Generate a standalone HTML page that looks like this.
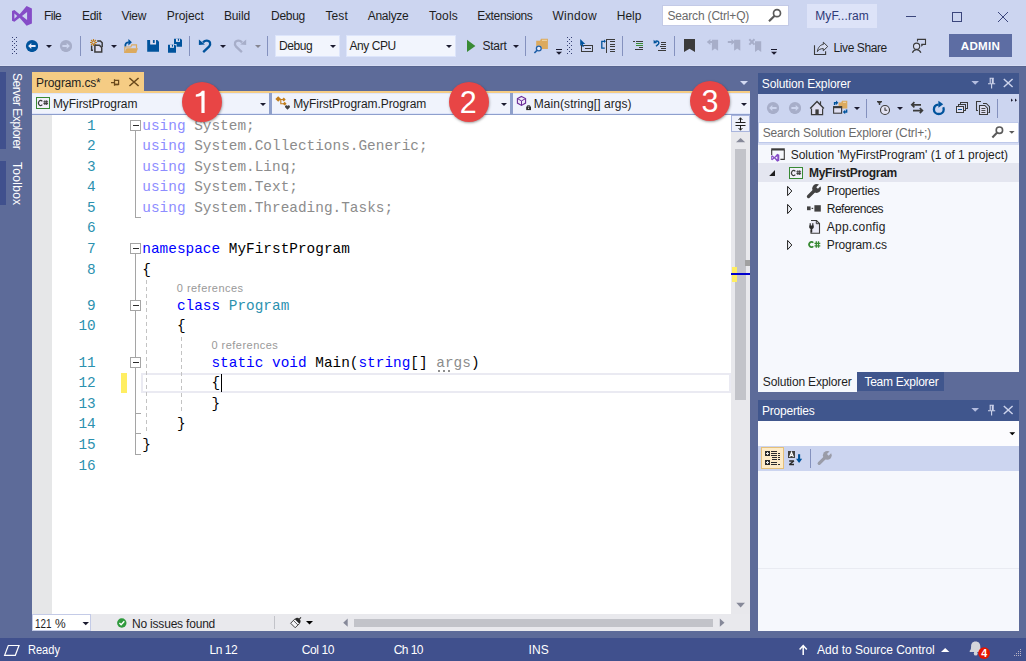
<!DOCTYPE html>
<html><head><meta charset="utf-8"><title>Program.cs - MyFirstProgram</title>
<style>
html,body{margin:0;padding:0}
body{width:1026px;height:661px;overflow:hidden;position:relative;background:#5d6b99;font-family:"Liberation Sans",sans-serif}
div,span,svg{position:absolute;display:block}
span{white-space:pre}
</style></head><body>

<div style="left:0px;top:0px;width:1026px;height:66px;background:#ccd5f0;"></div>
<div style="left:0px;top:65px;width:1026px;height:1px;background:#d6ddf4;"></div>
<div style="left:0px;top:66px;width:1026px;height:1px;background:#56648f;"></div>
<div style="left:662px;top:5px;width:127px;height:21px;background:#ffffff;box-sizing:border-box;border:1px solid #c3cae6;"></div>
<div style="left:807px;top:4px;width:70px;height:24px;background:#dde3f8;"></div>
<div style="left:275px;top:35px;width:65px;height:22px;background:#f2f5fd;box-sizing:border-box;border:1px solid #dde5fb;"></div>
<div style="left:346px;top:35px;width:110px;height:22px;background:#f2f5fd;box-sizing:border-box;border:1px solid #dde5fb;"></div>
<div style="left:949px;top:34px;width:63px;height:23px;background:#5d6da3;"></div>
<div style="left:80px;top:36px;width:1px;height:20px;background:#8491be;"></div>
<div style="left:189px;top:36px;width:1px;height:20px;background:#8491be;"></div>
<div style="left:267px;top:36px;width:1px;height:20px;background:#8491be;"></div>
<div style="left:525px;top:36px;width:1px;height:20px;background:#8491be;"></div>
<div style="left:622px;top:36px;width:1px;height:20px;background:#8491be;"></div>
<div style="left:674px;top:36px;width:1px;height:20px;background:#8491be;"></div>
<div style="left:0px;top:72px;width:6px;height:77px;background:#40508d;"></div>
<div style="left:0px;top:161px;width:6px;height:43.5px;background:#40508d;"></div>
<div style="left:32px;top:72px;width:112px;height:19px;background:#f5cc84;"></div>
<div style="left:32px;top:91px;width:718px;height:2px;background:#f5cc84;"></div>
<div style="left:32px;top:93px;width:718px;height:21px;background:#f0f3fc;box-sizing:border-box;border-top:1px solid #dfe6fa;border-bottom:1px solid #dfe6fa;"></div>
<div style="left:32px;top:114px;width:718px;height:1px;background:#8e9fcd;"></div>
<div style="left:269.2px;top:93px;width:2.7px;height:22px;background:#8fa0cb;"></div>
<div style="left:510px;top:93px;width:2.7px;height:22px;background:#8fa0cb;"></div>
<div style="left:32px;top:115px;width:718px;height:499px;background:#ffffff;"></div>
<div style="left:32px;top:115px;width:20px;height:499px;background:#e6e7e8;"></div>
<div style="left:731px;top:115px;width:19px;height:499px;background:#e8e8ec;"></div>
<div style="left:731px;top:115px;width:19px;height:17px;background:#eef1fb;box-sizing:border-box;border:1px solid #a9b5dd;"></div>
<div style="left:734.5px;top:149px;width:11.5px;height:251px;background:#c2c3c9;"></div>
<div style="left:744.5px;top:260px;width:5px;height:6px;background:#a0a0a0;"></div>
<div style="left:731.5px;top:267px;width:5px;height:15px;background:#ffee62;"></div>
<div style="left:731px;top:273px;width:19px;height:2px;background:#0000cd;"></div>
<div style="left:32px;top:614px;width:718px;height:17px;background:#e9e9ed;"></div>
<div style="left:32px;top:614px;width:59px;height:17px;background:#ffffff;box-sizing:border-box;border:1px solid #c4cbe7;"></div>
<div style="left:274px;top:616px;width:1px;height:13px;background:#c2c3c9;"></div>
<div style="left:354px;top:618.6px;width:359px;height:8.2px;background:#c2c3c9;"></div>
<div style="left:141px;top:373px;width:590px;height:20px;background:transparent;box-sizing:border-box;border:2px solid #eaeaf2;"></div>
<div style="left:120.5px;top:372.5px;width:6.5px;height:20.5px;background:#ffee62;"></div>
<div style="left:220.5px;top:373.5px;width:1.2px;height:18px;background:#000000;"></div>
<div style="left:438px;top:370px;width:2px;height:2px;background:#8f8f8f;"></div>
<div style="left:442.7px;top:370px;width:2px;height:2px;background:#8f8f8f;"></div>
<div style="left:447.5px;top:370px;width:2.2px;height:2px;background:#8f8f8f;"></div>
<div style="left:758px;top:73px;width:261px;height:21px;background:#40568d;"></div>
<div style="left:758px;top:94px;width:261px;height:28px;background:#ccd5f0;"></div>
<div style="left:758px;top:122px;width:261px;height:23px;background:#d5dcf3;"></div>
<div style="left:758px;top:122px;width:261px;height:21px;background:#ffffff;box-sizing:border-box;border:1px solid #bec9ea;"></div>
<div style="left:758px;top:145px;width:261px;height:227px;background:#f6f8fd;"></div>
<div style="left:758px;top:163px;width:261px;height:18.7px;background:#e4e6f0;"></div>
<div style="left:866px;top:98.5px;width:1px;height:19.5px;background:#8491be;"></div>
<div style="left:997px;top:98.5px;width:1px;height:19.5px;background:#8491be;"></div>
<div style="left:758px;top:372px;width:99px;height:20px;background:#f6f8fd;"></div>
<div style="left:857px;top:372px;width:87px;height:19px;background:#40568d;"></div>
<div style="left:758px;top:400px;width:261px;height:21px;background:#40568d;"></div>
<div style="left:758px;top:421px;width:261px;height:25px;background:#fcfcfe;"></div>
<div style="left:758px;top:446px;width:261px;height:25px;background:#ccd5f0;"></div>
<div style="left:758px;top:471px;width:261px;height:160px;background:#f6f8fd;"></div>
<div style="left:761px;top:447px;width:23px;height:22px;background:#fdebc8;box-sizing:border-box;border:1px solid #e5c07a;"></div>
<div style="left:758px;top:568px;width:261px;height:1px;background:#e9ebf2;"></div>
<div style="left:810px;top:449px;width:1px;height:19px;background:#8491be;"></div>
<div style="left:0px;top:638px;width:1026px;height:23px;background:#40508d;"></div>
<svg style="left:10px;top:4px;" width="24" height="24" viewBox="10 4 24 24"><path fill="#854cc7" fill-rule="evenodd" d="M12,11.1 L14.4,10 L19.6,14.2 L26.6,6 L31.9,8.4 V23.4 L26.6,25.8 L19.6,17.8 L14.4,21.8 L12,20.7 Z M27.1,12 V20 L22,16 Z M14.4,13.4 V18.8 L17.2,16 Z"/></svg>
<svg style="left:11px;top:36px;shape-rendering:crispEdges;" width="8" height="20" viewBox="11 36 8 20"><g fill="#353f73"><rect x="12" y="37" width="1" height="1"/><rect x="16" y="37" width="1" height="1"/><rect x="14" y="39" width="1" height="1"/><rect x="12" y="41" width="1" height="1"/><rect x="16" y="41" width="1" height="1"/><rect x="14" y="43" width="1" height="1"/><rect x="12" y="45" width="1" height="1"/><rect x="16" y="45" width="1" height="1"/><rect x="14" y="47" width="1" height="1"/><rect x="12" y="49" width="1" height="1"/><rect x="16" y="49" width="1" height="1"/><rect x="14" y="51" width="1" height="1"/><rect x="12" y="53" width="1" height="1"/><rect x="16" y="53" width="1" height="1"/></g></svg>
<svg style="left:566px;top:36px;shape-rendering:crispEdges;" width="8" height="20" viewBox="566 36 8 20"><g fill="#353f73"><rect x="567" y="37" width="1" height="1"/><rect x="571" y="37" width="1" height="1"/><rect x="569" y="39" width="1" height="1"/><rect x="567" y="41" width="1" height="1"/><rect x="571" y="41" width="1" height="1"/><rect x="569" y="43" width="1" height="1"/><rect x="567" y="45" width="1" height="1"/><rect x="571" y="45" width="1" height="1"/><rect x="569" y="47" width="1" height="1"/><rect x="567" y="49" width="1" height="1"/><rect x="571" y="49" width="1" height="1"/><rect x="569" y="51" width="1" height="1"/><rect x="567" y="53" width="1" height="1"/><rect x="571" y="53" width="1" height="1"/></g></svg>
<svg style="left:24px;top:38px;" width="14" height="14" viewBox="24 38 14 14"><circle cx="32" cy="46" r="6.1" fill="#00539c"/><path d="M28.1,46 L31.3,43 V45 H35.6 V47 H31.3 V49 Z" fill="#e9ecfb"/></svg>
<svg style="left:58px;top:38px;" width="14" height="14" viewBox="58 38 14 14"><circle cx="66" cy="46" r="6.1" fill="#a7aec9"/><path d="M69.9,46 L66.7,43 V45 H62.4 V47 H66.7 V49 Z" fill="#cdd5ee"/></svg>
<svg style="left:44px;top:43px;" width="10" height="7" viewBox="44 43 10 7"><path d="M46,45 H52 L49.0,48.0 Z" fill="#1b1b2f"/></svg>
<svg style="left:88px;top:37px;" width="17" height="18" viewBox="88 37 17 18">
<g stroke="#c27d1a" stroke-width="1.1" stroke-linecap="butt"><path d="M93.5,39 V46 M90,42.5 H97 M91,40 L96,45 M96,40 L91,45"/></g>
<circle cx="93.5" cy="42.5" r="1.1" fill="#ccd5f0"/>
<path d="M97.2,40.9 H100.4 L102.2,42.7 V47" fill="none" stroke="#3b3b3b" stroke-width="1.5"/>
<path d="M91.6,45.6 V50.2 H93" fill="none" stroke="#3b3b3b" stroke-width="1.4"/>
<path d="M94.9,45.2 H99.4 L101.7,47.5 V52 H94.9 Z" fill="#dedef0" stroke="#3b3b3b" stroke-width="1.5"/>
</svg>
<svg style="left:109px;top:43px;" width="10" height="7" viewBox="109 43 10 7"><path d="M111,45 H117 L114.0,48.0 Z" fill="#1b1b2f"/></svg>
<svg style="left:122px;top:37px;" width="18" height="18" viewBox="122 37 18 18">
<path d="M124.8,53 V47 H130.8 L131.8,44.8 H136.5 V48.4" fill="none" stroke="#dcaa5e" stroke-width="1.2"/>
<path d="M126.5,48.3 H138 L136.3,53.1 H124.3 Z" fill="#dcaa5e"/>
<path d="M125.4,46.4 C124.9,43.6 126.4,42.3 128.8,42.3" fill="none" stroke="#00539c" stroke-width="1.8"/>
<path d="M128.4,39.1 L131.9,42.3 L128.4,45.5 Z" fill="#00539c"/>
</svg>
<svg style="left:146px;top:39px;" width="15" height="15" viewBox="146 39 15 15"><path d="M147.2,40 H157.32833333333332 L159.0,41.67166666666667 V51.8 H147.2 Z" fill="#00539c"/><rect x="150.14999999999998" y="40" width="5.9" height="4.523333333333333" fill="#dedef0"/><rect x="152.9033333333333" y="40" width="1.7700000000000002" height="2.95" fill="#00539c"/></svg>
<svg style="left:167px;top:38px;" width="16" height="16" viewBox="167 38 16 16"><path d="M174,38.8 H180.86666666666667 L182,39.93333333333333 V46.8 H174 Z" fill="#00539c"/><rect x="176.0" y="38.8" width="4.0" height="3.0666666666666664" fill="#dedef0"/><rect x="177.86666666666667" y="38.8" width="1.2" height="2.0" fill="#00539c"/><path d="M167.3,44 H176.6 V53.4 H167.3 Z" fill="#ccd5f0"/><path d="M168,44.7 H174.86666666666667 L176,45.833333333333336 V52.7 H168 Z" fill="#00539c"/><rect x="170.0" y="44.7" width="4.0" height="3.0666666666666664" fill="#dedef0"/><rect x="171.86666666666667" y="44.7" width="1.2" height="2.0" fill="#00539c"/></svg>
<svg style="left:197px;top:37px;" width="16" height="18" viewBox="197 37 16 18"><path d="M203.2,52.2 L209,46.6 C211.3,44.2 210.2,40.6 206.6,40.6 C205.2,40.6 204.2,41.2 203,42.4" fill="none" stroke="#00539c" stroke-width="2.3"/><path d="M198.9,39.4 V45 L204.9,44.6 Z" fill="#00539c"/></svg>
<svg style="left:232px;top:37px;" width="16" height="18" viewBox="232 37 16 18"><g transform="translate(445.1,0) scale(-1,1)"><path d="M203.2,52.2 L209,46.6 C211.3,44.2 210.2,40.6 206.6,40.6 C205.2,40.6 204.2,41.2 203,42.4" fill="none" stroke="#a7aec9" stroke-width="2.3"/><path d="M198.9,39.4 V45 L204.9,44.6 Z" fill="#a7aec9"/></g></svg>
<svg style="left:218px;top:43px;" width="10" height="7" viewBox="218 43 10 7"><path d="M220,45 H226 L223.0,48.0 Z" fill="#1b1b2f"/></svg>
<svg style="left:253px;top:43px;" width="10" height="7" viewBox="253 43 10 7"><path d="M255,45 H261 L258.0,48.0 Z" fill="#858590"/></svg>
<svg style="left:328px;top:43px;" width="10" height="7" viewBox="328 43 10 7"><path d="M330,45 H336 L333.0,48.0 Z" fill="#1b1b2f"/></svg>
<svg style="left:444px;top:43px;" width="10" height="7" viewBox="444 43 10 7"><path d="M446,45 H452 L449.0,48.0 Z" fill="#1b1b2f"/></svg>
<svg style="left:465px;top:38px;" width="12" height="16" viewBox="465 38 12 16"><path d="M467,39.8 L475.4,45.9 L467,52 Z" fill="#388a34"/></svg>
<svg style="left:511px;top:43px;" width="10" height="7" viewBox="511 43 10 7"><path d="M513,45 H519 L516.0,48.0 Z" fill="#1b1b2f"/></svg>
<svg style="left:532px;top:37px;" width="18" height="18" viewBox="532 37 18 18">
<path d="M536.2,40.8 H540 L541,38.8 H547.9 V49 H536.2 Z" fill="#dcaa5e"/>
<rect x="542" y="39.8" width="5" height="1" fill="#efd9b0"/>
<circle cx="538.8" cy="48.5" r="3" fill="#ccd5f0"/>
<circle cx="538.8" cy="48.5" r="2.4" fill="#e6eaf8" stroke="#1f5fa8" stroke-width="1.3"/>
<path d="M537,50.4 L534.4,53" stroke="#1f5fa8" stroke-width="1.6"/>
</svg>
<svg style="left:555px;top:47px;" width="9" height="9" viewBox="555 47 9 9"><rect x="556" y="49" width="6" height="1" fill="#1b1b2f" shape-rendering="crispEdges"/><path d="M556,51.7 H562 L559.0,54.7 Z" fill="#1b1b2f"/></svg>
<svg style="left:770px;top:47px;" width="9" height="9" viewBox="770 47 9 9"><rect x="771" y="49" width="6" height="1" fill="#1b1b2f" shape-rendering="crispEdges"/><path d="M771,51.7 H777 L774.0,54.7 Z" fill="#1b1b2f"/></svg>
<svg style="left:578px;top:37px;" width="17" height="17" viewBox="578 37 17 17">
<path d="M581.5,45.5 H592.5 V51.5 H581.5 Z" fill="#ccd5f0" stroke="#3b3b3b" stroke-width="1" shape-rendering="crispEdges"/>
<path d="M584.5,48.5 H590.5" stroke="#3b3b3b" stroke-width="1" shape-rendering="crispEdges"/>
<path d="M580.2,39 L585.2,44 H582.8 L584,46.4 L582.7,47 L581.5,44.6 L580.2,46 Z" fill="#00539c"/>
</svg>
<svg style="left:600px;top:37px;" width="17" height="17" viewBox="600 37 17 17">
<path d="M604.8,41.3 H601.8 V48.2 H604.8" fill="none" stroke="#00539c" stroke-width="1.3"/>
<path d="M604,39.6 L606,41.3 L604,43" fill="#00539c"/>
<g fill="#3b3b3b" shape-rendering="crispEdges"><rect x="606" y="39" width="1" height="14"/><rect x="606" y="39" width="9.4" height="1"/><rect x="610" y="41" width="5.4" height="1"/><rect x="610" y="44" width="5.4" height="1"/><rect x="610" y="46" width="5.4" height="1"/><rect x="610" y="49" width="5.4" height="1"/><rect x="610" y="51" width="5.4" height="1"/></g>
</svg>
<svg style="left:632px;top:39px;" width="12" height="13" viewBox="632 39 12 13">
<g shape-rendering="crispEdges"><rect x="633" y="41" width="1.5" height="1" fill="#3b3b3b"/><rect x="636" y="41" width="7" height="1" fill="#3b3b3b"/>
<rect x="636" y="43" width="7" height="1" fill="#388a34"/><rect x="636" y="45" width="7" height="1" fill="#388a34"/>
<rect x="639" y="47" width="4" height="1" fill="#3b3b3b"/><rect x="635" y="49" width="8" height="1" fill="#3b3b3b"/></g>
</svg>
<svg style="left:652px;top:38px;" width="16" height="15" viewBox="652 38 16 15">
<path d="M656,46.3 L658.2,44.2 C659.4,43 658.8,41 656.9,41 C656.2,41 655.8,41.2 655.4,41.6" fill="none" stroke="#00539c" stroke-width="1.5"/>
<path d="M653.6,39.8 V43.4 L657.2,43 Z" fill="#00539c"/>
<g shape-rendering="crispEdges" fill="#3b3b3b"><rect x="661" y="42" width="5" height="1"/><rect x="661" y="44" width="5" height="1"/><rect x="660" y="46" width="6" height="1"/><rect x="661" y="48" width="5" height="1"/><rect x="658" y="50" width="8" height="1"/></g>
</svg>
<svg style="left:683px;top:38px;" width="13" height="15" viewBox="683 38 13 15"><path d="M684,39 H695 V52 L689.5,48.7 L684,52 Z" fill="#3b3b3b"/></svg>
<svg style="left:706px;top:38px;" width="14" height="15" viewBox="706 38 14 15"><path d="M711.9,39.8 H718.1 V50.8 L715.0,48.599999999999994 L711.9,50.8 Z" fill="#a7aec9"/><path d="M706.8,42 L710.4,38.9 V41 H714.4 V43 H710.4 V45.1 Z" fill="#a7aec9"/></svg>
<svg style="left:727px;top:38px;" width="14" height="15" viewBox="727 38 14 15"><path d="M734.1,39.8 H740.3000000000001 V50.8 L737.2,48.599999999999994 L734.1,50.8 Z" fill="#a7aec9"/><path d="M735,42 L731.4,38.9 V41 H727.8 V43 H731.4 V45.1 Z" fill="#a7aec9"/></svg>
<svg style="left:748px;top:38px;" width="14" height="15" viewBox="748 38 14 15"><path d="M755,41.2 H761.2 V51.900000000000006 L758.1,49.7 L755,51.900000000000006 Z" fill="#a7aec9"/><path d="M749.3,39.3 L754.5,44.6 M754.5,39.3 L749.3,44.6" stroke="#a7aec9" stroke-width="2"/></svg>
<svg style="left:812px;top:40px;" width="18" height="16" viewBox="812 40 18 16">
<path d="M814.5,45.2 V54.5 H825.6 V51.2" fill="none" stroke="#3b3b3b" stroke-width="1.1"/>
<path d="M817.4,51.6 C818,47.2 820.4,44.7 823.3,44.5 V42.2 L827.7,46.5 L823.3,50.8 V48.6 C820.5,48.6 818.6,49.6 817.4,51.6 Z" fill="#d8ddf1" stroke="#3b3b3b" stroke-width="1"/>
</svg>
<svg style="left:910px;top:37px;" width="18" height="18" viewBox="910 37 18 18">
<path d="M917.5,41.6 V39.4 H925.5 V44.4 H921.3" fill="none" stroke="#3b3b3b" stroke-width="1.1"/>
<path d="M921.2,44.2 L923,45.4 L921.2,46.8 Z" fill="#3b3b3b"/>
<circle cx="916.6" cy="46.2" r="3.1" fill="#d8ddf1" stroke="#3b3b3b" stroke-width="1.1"/>
<path d="M912.4,52.8 C913.2,50.6 914.6,49.6 916.6,49.6 C918.6,49.6 920,50.6 920.9,52.8" fill="none" stroke="#3b3b3b" stroke-width="1.2"/>
</svg>
<svg style="left:904px;top:10px;" width="14" height="14" viewBox="904 10 14 14"><rect x="906" y="16" width="10" height="1" fill="#3b467c" shape-rendering="crispEdges"/></svg>
<svg style="left:950px;top:10px;" width="14" height="14" viewBox="950 10 14 14"><rect x="952.5" y="12.5" width="9" height="9" fill="none" stroke="#3b467c" stroke-width="1" shape-rendering="crispEdges"/></svg>
<svg style="left:996px;top:10px;" width="14" height="14" viewBox="996 10 14 14"><path d="M998,12 L1008,22 M1008,12 L998,22" stroke="#3b467c" stroke-width="1"/></svg>
<svg style="left:766px;top:7px;" width="17" height="17" viewBox="766 7 17 17"><circle cx="777" cy="13.2" r="3.5" fill="none" stroke="#5a5a5a" stroke-width="1.7"/><path d="M774.6,15.8 L769,21.2" stroke="#5a5a5a" stroke-width="2.2"/></svg>
<svg style="left:109px;top:76px;" width="12" height="12" viewBox="109 76 12 12"><g stroke="#6b4a1d" fill="none" stroke-width="1.25"><path d="M111,82.5 H114.5 M114.5,79.3 V85.7"/><path d="M114.5,80.4 H118.6 V84.3 H114.5"/><path d="M114.5,84.6 H118.6" stroke-width="1.5"/></g></svg>
<svg style="left:127px;top:76px;" width="14" height="12" viewBox="127 76 14 12"><path d="M129.4,78 L138.6,86 M138.6,78 L129.4,86" stroke="#6b4a1d" stroke-width="1.6"/></svg>
<svg style="left:738px;top:79px;" width="12" height="8" viewBox="738 79 12 8"><path d="M740,81 H748 L744.0,85.0 Z" fill="#d3daf2"/></svg>
<svg style="left:258px;top:101px;" width="10" height="7" viewBox="258 101 10 7"><path d="M260,103 H266 L263.0,106.0 Z" fill="#1b1b2f"/></svg>
<svg style="left:499px;top:101px;" width="10" height="7" viewBox="499 101 10 7"><path d="M501,103 H507 L504.0,106.0 Z" fill="#1b1b2f"/></svg>
<svg style="left:739px;top:101px;" width="10" height="7" viewBox="739 101 10 7"><path d="M741,103 H747 L744.0,106.0 Z" fill="#1b1b2f"/></svg>
<svg style="left:35px;top:96px;" width="16" height="14" viewBox="35 96 16 14"><rect x="36.5" y="97.5" width="13" height="11" fill="#f2f0fa" stroke="#388a34" stroke-width="1"/><path d="M42.3,101.3 A2.15,2.6 0 1 0 42.3,104.7" fill="none" stroke="#3c3c3c" stroke-width="1.15"/><path d="M44.9,100.3 V105 M46.7,100.3 V105 M43.4,101.8 H48.1 M43.4,103.6 H48.1" fill="none" stroke="#3c3c3c" stroke-width="1"/></svg>
<svg style="left:788px;top:166px;" width="16" height="14" viewBox="788 166 16 14"><rect x="789.5" y="167.5" width="13" height="11" fill="#f2f0fa" stroke="#388a34" stroke-width="1"/><path d="M795.3,171.3 A2.15,2.6 0 1 0 795.3,174.7" fill="none" stroke="#3c3c3c" stroke-width="1.15"/><path d="M797.9,170.3 V175 M799.7,170.3 V175 M796.4,171.8 H801.1 M796.4,173.6 H801.1" fill="none" stroke="#3c3c3c" stroke-width="1"/></svg>
<svg style="left:274px;top:94px;" width="18" height="18" viewBox="274 94 18 18">
<path d="M278.2,96.2 L281,99 L278.2,101.8 L275.4,99 Z" fill="#c27d1a"/>
<path d="M283.8,97.6 L285.7,99.5 L283.8,101.4 L281.9,99.5 Z" fill="#c27d1a"/>
<path d="M284.7,101.8 L286.6,103.7 L284.7,105.6 L282.8,103.7 Z" fill="#c27d1a"/>
<path d="M279,99.5 H283 M280.8,99.5 V103.7 H284" fill="none" stroke="#c27d1a" stroke-width="1.1"/>
<path d="M287.5,109.8 L285.3,107.4 C284.6,106.4 285.3,105.2 286.3,105.2 C286.9,105.2 287.3,105.5 287.5,106 C287.7,105.5 288.1,105.2 288.7,105.2 C289.7,105.2 290.4,106.4 289.7,107.4 Z" fill="#424242"/>
</svg>
<svg style="left:515px;top:94px;" width="18" height="18" viewBox="515 94 18 18">
<path d="M521.5,96.4 L525.6,98.6 V103.1 L521.5,105.4 L517.4,103.1 V98.6 Z" fill="#efe9f7" stroke="#6a2c98" stroke-width="1.1"/>
<path d="M517.6,98.7 L521.5,100.9 L525.4,98.7 M521.5,100.9 V105.2" fill="none" stroke="#6a2c98" stroke-width="1"/>
<rect x="526.2" y="106.6" width="4.8" height="3.5" fill="#2b2b2b"/>
<path d="M527.4,106.8 V105.8 H529.8 V106.8" fill="none" stroke="#2b2b2b" stroke-width="1"/>
<rect x="528.1" y="107.7" width="1" height="1.2" fill="#f0f0f0"/>
</svg>
<svg style="left:733px;top:116px;" width="16" height="16" viewBox="733 116 16 16"><g stroke="#1e1e1e" stroke-width="1" fill="none"><path d="M735.5,122.5 H745.5 M735.5,125.5 H745.5 M740.5,117.8 V122 M740.5,126 V130.2"/><path d="M738.6,120 L740.5,117.8 L742.4,120 M738.6,128 L740.5,130.2 L742.4,128"/></g></svg>
<svg style="left:734px;top:136px;" width="13" height="8" viewBox="734 136 13 8"><path d="M736,142.3 H745.2 L740.6,138 Z" fill="#868999"/></svg>
<svg style="left:734px;top:601px;" width="13" height="8" viewBox="734 601 13 8"><path d="M736.3,602.8 H745 L740.6,607.4 Z" fill="#868999"/></svg>
<svg style="left:341px;top:617px;" width="9" height="12" viewBox="341 617 9 12"><path d="M347.7,618.6 V626.8 L343.2,622.7 Z" fill="#868999"/></svg>
<svg style="left:717px;top:617px;" width="9" height="12" viewBox="717 617 9 12"><path d="M719.8,618.6 V626.8 L724.5,622.7 Z" fill="#868999"/></svg>
<svg style="left:128px;top:116px;" width="60" height="340" viewBox="128 116 60 340"><g shape-rendering="crispEdges">
<path d="M135.5,131 V217.5 H141" fill="none" stroke="#a5a5a5" stroke-width="1"/>
<path d="M135.5,254 V454.5 H141 M135.5,413.5 H141 M135.5,433.5 H141" fill="none" stroke="#a5a5a5" stroke-width="1"/>
<path d="M146.5,280 V431 M181.5,337 V413" fill="none" stroke="#c3c3c3" stroke-width="1" stroke-dasharray="4 3"/>
<rect x="130.5" y="120.5" width="10" height="10" fill="#ffffff" stroke="#a5a5a5" stroke-width="1"/><rect x="132.5" y="125" width="6" height="1" fill="#2c2c2c"/><rect x="130.5" y="243.5" width="10" height="10" fill="#ffffff" stroke="#a5a5a5" stroke-width="1"/><rect x="132.5" y="248" width="6" height="1" fill="#2c2c2c"/><rect x="130.5" y="300.5" width="10" height="10" fill="#ffffff" stroke="#a5a5a5" stroke-width="1"/><rect x="132.5" y="305" width="6" height="1" fill="#2c2c2c"/><rect x="130.5" y="357.5" width="10" height="10" fill="#ffffff" stroke="#a5a5a5" stroke-width="1"/><rect x="132.5" y="362" width="6" height="1" fill="#2c2c2c"/>
</g></svg>
<svg style="left:80px;top:619px;" width="12" height="8" viewBox="80 619 12 8"><path d="M82.5,622 H89 L85.75,625.25 Z" fill="#1b1b2f"/></svg>
<svg style="left:116px;top:617px;" width="12" height="12" viewBox="116 617 12 12"><circle cx="121.8" cy="623" r="4.7" fill="#2f9a3d"/><path d="M119.4,623.1 L121.1,624.8 L124.3,621.2" fill="none" stroke="#fff" stroke-width="1.4"/></svg>
<svg style="left:288px;top:614px;" width="16" height="16" viewBox="288 614 16 16"><g transform="translate(296.3,622.1) rotate(45)">
<path d="M0,-6.6 V-4" stroke="#2b2b2b" stroke-width="1.1"/>
<path d="M-3.3,-1.2 A3.3,3.3 0 0 1 3.3,-1.2 Z" fill="#2b2b2b"/>
<rect x="-3.2" y="-1.2" width="6.4" height="6" fill="#f6f6fa" stroke="#3b3b3b" stroke-width="0.9"/>
<path d="M-3.2,0.9 H3.2" stroke="#3b3b3b" stroke-width="0.8"/>
</g></svg>
<svg style="left:304px;top:619px;" width="12" height="8" viewBox="304 619 12 8"><path d="M306,621 H313 L309.5,624.5 Z" fill="#000000"/></svg>
<svg style="left:2px;top:643px;" width="20" height="15" viewBox="2 643 20 15"><path d="M8.3,645.5 H19 L15.3,655.3 H4.6 Z" fill="none" stroke="#ffffff" stroke-width="1.2"/></svg>
<svg style="left:797px;top:643px;" width="12" height="14" viewBox="797 643 12 14"><path d="M803.2,655 V646 M799.6,649.6 L803.2,645.6 L806.8,649.6" fill="none" stroke="#ffffff" stroke-width="1.5"/></svg>
<svg style="left:939px;top:646px;" width="12" height="8" viewBox="939 646 12 8"><path d="M941,652 H949.4 L945.2,648 Z" fill="#ffffff"/></svg>
<svg style="left:968px;top:640px;" width="24" height="21" viewBox="968 640 24 21"><path d="M975.6,641.5 C978.9,641.5 980.3,643.7 980.3,646.4 C980.3,649 981,650.2 981.7,650.8 V651.9 H969.7 V650.8 C970.4,650.2 971.1,649 971.1,646.4 C971.1,643.7 972.3,641.5 975.6,641.5 Z" fill="#d5d6db"/><ellipse cx="975.7" cy="653.4" rx="1.9" ry="2.2" fill="#d5d6db"/>
<circle cx="984.1" cy="653.1" r="5.9" fill="#e51400"/>
<text x="984.1" y="656.9" text-anchor="middle" font-family="Liberation Sans, sans-serif" font-weight="bold" font-size="10.6" fill="#ffffff">4</text></svg>
<svg style="left:1012px;top:647px;" width="13" height="13" viewBox="1012 647 13 13"><g fill="#b7b2c3"><rect x="1020" y="649" width="1" height="1"/><rect x="1018" y="651" width="1" height="1"/><rect x="1020" y="651" width="1" height="1"/><rect x="1016" y="653" width="1" height="1"/><rect x="1018" y="653" width="1" height="1"/><rect x="1020" y="653" width="1" height="1"/><rect x="1014" y="655" width="1" height="1"/><rect x="1016" y="655" width="1" height="1"/><rect x="1018" y="655" width="1" height="1"/><rect x="1020" y="655" width="1" height="1"/></g></svg>
<svg style="left:765px;top:100px;" width="14" height="14" viewBox="765 100 14 14"><circle cx="773" cy="108" r="6.1" fill="#a7aec9"/><path d="M769.1,108 L772.3000000000001,105 V107 H776.6 V109 H772.3000000000001 V111 Z" fill="#cdd5ee"/></svg>
<svg style="left:787px;top:100px;" width="14" height="14" viewBox="787 100 14 14"><circle cx="795" cy="108" r="6.1" fill="#a7aec9"/><path d="M798.9,108 L795.6999999999999,105 V107 H791.4 V109 H795.6999999999999 V111 Z" fill="#cdd5ee"/></svg>
<svg style="left:808px;top:99px;" width="18" height="18" viewBox="808 99 18 18">
<path d="M811.5,108 V114.6 H822.6 V108 L817,102.2 Z" fill="#dedef0"/>
<path d="M811.5,108.6 V114.6 H822.6 V108.6" fill="none" stroke="#3b3b3b" stroke-width="1.2"/>
<path d="M810.2,108.6 L817,101.6 L823.9,108.6" fill="none" stroke="#3b3b3b" stroke-width="1.4"/>
<path d="M820.5,101.3 V105" stroke="#3b3b3b" stroke-width="1.2"/>
<rect x="815.4" y="109.4" width="3.3" height="5.2" fill="#3b3b3b"/>
</svg>
<svg style="left:831px;top:99px;" width="18" height="17" viewBox="831 99 18 17">
<path d="M838.6,102.6 H841.2 L842,100.8 H847.3 V108.6 H838.6 Z" fill="#dcaa5e"/>
<rect x="843" y="101.8" width="3" height="1" fill="#efd9b0"/>
<rect x="833.6" y="106.8" width="8" height="6.4" fill="#dedef0" stroke="#3b3b3b" stroke-width="1.1"/>
<rect x="833.1" y="106.2" width="9" height="2" fill="#3b3b3b"/>
<path d="M834.6,105 V102.8 H836.4" fill="none" stroke="#00539c" stroke-width="1.5"/>
<path d="M836,100.6 L838.4,102.8 L836,105 Z" fill="#00539c"/>
<path d="M846.6,109.6 V112 H845" fill="none" stroke="#00539c" stroke-width="1.5"/>
<path d="M845.2,109.8 L842.8,112 L845.2,114.2 Z" fill="#00539c"/>
</svg>
<svg style="left:852px;top:105px;" width="10" height="7" viewBox="852 105 10 7"><path d="M854,107 H860 L857.0,110.0 Z" fill="#1b1b2f"/></svg>
<svg style="left:875px;top:99px;" width="17" height="17" viewBox="875 99 17 17">
<path d="M877,100.9 H882 V101.9 L880.2,103.4 V105 H878.8 V103.4 L877,101.9 Z" fill="#3b3b3b"/>
<circle cx="885" cy="110" r="4.5" fill="#e3e3f3" stroke="#3b3b3b" stroke-width="1.1"/>
<path d="M885,107.4 V110.3 H887.2" fill="none" stroke="#3b3b3b" stroke-width="1.1"/>
</svg>
<svg style="left:895px;top:105px;" width="10" height="7" viewBox="895 105 10 7"><path d="M897,107 H903 L900.0,110.0 Z" fill="#1b1b2f"/></svg>
<svg style="left:909px;top:100px;" width="16" height="16" viewBox="909 100 16 16">
<g fill="none" stroke="#3b3b3b" stroke-width="1.7"><path d="M912.4,104.8 H921 M914.4,102.2 L911.8,104.8 L914.4,107.4"/><path d="M913,110.6 H921.8 M919.8,108 L922.4,110.6 L919.8,113.2"/></g>
</svg>
<svg style="left:931px;top:99px;" width="16" height="18" viewBox="931 99 16 18">
<path d="M938.6,104.6 C935.8,104.8 933.9,106.8 933.9,109.4 C933.9,112 936,114 938.8,114 C941.6,114 943.7,112 943.7,109.4 C943.7,108.6 943.5,107.9 943.2,107.3" fill="none" stroke="#00539c" stroke-width="2.3"/>
<path d="M938.4,100.8 L943.2,104.3 L938.4,107.8 Z" fill="#00539c"/>
</svg>
<svg style="left:954px;top:100px;" width="15" height="15" viewBox="954 100 15 15">
<g fill="none" stroke="#3b3b3b" stroke-width="1" shape-rendering="crispEdges"><path d="M960.5,104 V102.5 H967.5 V108.5 H966"/><path d="M958.5,106 V104.5 H965.5 V110.5 H964"/>
<rect x="956.5" y="106.5" width="7" height="6" fill="#dedef0"/></g>
<rect x="958" y="109" width="4" height="1" fill="#00539c" shape-rendering="crispEdges"/>
</svg>
<svg style="left:974px;top:99px;" width="17" height="17" viewBox="974 99 17 17">
<g fill="none" stroke="#3b3b3b" stroke-width="1.05">
<path d="M981,101.5 H976.5 V110.5 H978"/>
<path d="M983,103.5 H986.3 L989.5,106.7 V112.5 H988.4"/>
<path d="M979.5,105.5 H984.8 L987.5,108.2 V114.5 H979.5 Z" fill="#dedef0"/>
<path d="M981.4,108.5 H985.4 M981.4,110.5 H985.4 M981.4,112.5 H985.4" stroke-width="0.9"/>
</g></svg>
<svg style="left:1009px;top:97px;" width="10" height="6" viewBox="1009 97 10 6"><path d="M1011,98.6 L1013,100.2 L1011,101.8 Z M1015,98.6 L1017,100.2 L1015,101.8 Z" fill="#1b1b2f"/></svg>
<svg style="left:969px;top:78px;" width="12" height="10" viewBox="969 78 12 10"><path d="M971.4,81.0 H979 L975.2,84.80000000000001 Z" fill="#b4bde0"/></svg>
<svg style="left:985px;top:76px;" width="13" height="15" viewBox="985 76 13 15"><g fill="none" stroke="#cfd5ec" stroke-width="1.1"><path d="M989.6,78.3 H993.8 M990.2,78.3 V83.6 M993,78.3 V83.6"/><path d="M992.6,78.3 V83.6" stroke-width="1.6"/><path d="M988,83.8 H995.2 M991.6,83.8 V88.6"/></g></svg>
<svg style="left:1001px;top:76px;" width="14" height="14" viewBox="1001 76 14 14"><path d="M1003.8,79 L1012.6,87 M1012.6,79 L1003.8,87" stroke="#cbd2eb" stroke-width="1.5"/></svg>
<svg style="left:969px;top:405px;" width="12" height="10" viewBox="969 405 12 10"><path d="M971.4,408.0 H979 L975.2,411.8 Z" fill="#b4bde0"/></svg>
<svg style="left:985px;top:403px;" width="13" height="15" viewBox="985 403 13 15"><g fill="none" stroke="#cfd5ec" stroke-width="1.1"><path d="M989.6,405.3 H993.8 M990.2,405.3 V410.6 M993,405.3 V410.6"/><path d="M992.6,405.3 V410.6" stroke-width="1.6"/><path d="M988,410.8 H995.2 M991.6,410.8 V415.6"/></g></svg>
<svg style="left:1001px;top:403px;" width="14" height="14" viewBox="1001 403 14 14"><path d="M1003.8,406 L1012.6,414 M1012.6,406 L1003.8,414" stroke="#cbd2eb" stroke-width="1.5"/></svg>
<svg style="left:990px;top:124px;" width="16" height="16" viewBox="990 124 16 16"><circle cx="999.4" cy="130.2" r="3.2" fill="none" stroke="#5a5a5a" stroke-width="1.6"/><path d="M997.2,132.6 L992.4,137.6" stroke="#5a5a5a" stroke-width="2.1"/></svg>
<svg style="left:1007px;top:129px;" width="10" height="7" viewBox="1007 129 10 7"><path d="M1009,131 H1014.6 L1011.8,133.8 Z" fill="#5a5a5a"/></svg>
<svg style="left:769px;top:146px;" width="18" height="18" viewBox="769 146 18 18">
<path d="M771.2,149.4 H784.8" stroke="#3b3b3b" stroke-width="2.2"/>
<path d="M771.7,150 V155 M784.3,150 V159.4 H780.4" fill="none" stroke="#3b3b3b" stroke-width="1.1"/>
<path fill="#854cc7" fill-rule="evenodd" d="M771.2,155.7 L772.2,155.2 L774.4,157 L777.2,153.7 L779.3,154.7 V160.8 L777.2,161.8 L774.4,158.5 L772.2,160.3 L771.2,159.8 Z M777.3,156.2 V159.3 L775.3,157.75 Z M772.2,156.7 V158.8 L773.3,157.75 Z"/>
</svg>
<svg style="left:767px;top:168px;" width="10" height="10" viewBox="767 168 10 10"><path d="M769.2,176 H775 V170 Z" fill="#1e1e1e"/></svg>
<svg style="left:785px;top:184.5px;" width="9" height="12" viewBox="785 184.5 9 12"><path d="M787.6,185.9 V195.1 L791.8,190.5 Z" fill="none" stroke="#1e1e1e" stroke-width="1"/></svg>
<svg style="left:785px;top:202.5px;" width="9" height="12" viewBox="785 202.5 9 12"><path d="M787.6,203.9 V213.1 L791.8,208.5 Z" fill="none" stroke="#1e1e1e" stroke-width="1"/></svg>
<svg style="left:785px;top:238.8px;" width="9" height="12" viewBox="785 238.8 9 12"><path d="M787.6,240.20000000000002 V249.4 L791.8,244.8 Z" fill="none" stroke="#1e1e1e" stroke-width="1"/></svg>
<svg style="left:805px;top:183px;" width="18" height="16" viewBox="805 183 18 16"><path d="M808.5,196.5 L816.5999999999999,188.5" stroke="#424242" stroke-width="3.3" stroke-linecap="round"/><circle cx="816.5999999999999" cy="188.5" r="4.4" fill="#424242"/><path d="M817.0999999999999,188.0 L821.5999999999999,183.5" stroke="#f6f8fd" stroke-width="2.4"/></svg>
<svg style="left:806px;top:204px;" width="16" height="9" viewBox="806 204 16 9"><g fill="#424242"><rect x="807" y="206.4" width="3.6" height="3.8"/><rect x="811.6" y="207.8" width="1.6" height="1.2"/><rect x="814.4" y="205.2" width="6.4" height="6.4"/></g></svg>
<svg style="left:806px;top:219px;" width="16" height="16" viewBox="806 219 16 16">
<path d="M811,220.5 H816.5 L819.5,223.5 V233.3 H811 V229.5" fill="#ebebf7" stroke="#3b3b3b" stroke-width="1.1"/>
<path d="M816.3,220.5 V223.7 H819.5" fill="none" stroke="#3b3b3b" stroke-width="1"/>
<path d="M810.2,223.2 V226 M812.8,223.2 V226" stroke="#2b2b2b" stroke-width="1.2"/>
<path d="M809.2,225.4 H813.8 V227 C813.8,228.6 812.6,229 811.5,229 C810.4,229 809.2,228.6 809.2,227 Z" fill="#2b2b2b"/>
<path d="M811.5,228.6 V232.4" stroke="#2b2b2b" stroke-width="1.5"/>
</svg>
<svg style="left:807px;top:239px;" width="15" height="11" viewBox="807 239 15 11"><g fill="none" stroke="#388a34">
<path d="M813.2,242.7 A2.3,2.7 0 1 0 813.2,246.3" stroke-width="1.8"/>
<path d="M816.3,241.2 V247.8 M818.5,241.2 V247.8 M814.5,243.3 H820.3 M814.5,245.8 H820.3" stroke-width="1.3"/></g></svg>
<svg style="left:1007px;top:430px;" width="10" height="7" viewBox="1007 430 10 7"><path d="M1009.4,432.3 H1015.2 L1012.3,435.20000000000005 Z" fill="#000000"/></svg>
<svg style="left:763px;top:449px;" width="19" height="18" viewBox="763 449 19 18"><g shape-rendering="crispEdges" fill="#2b2b2b">
<rect x="765" y="451" width="5" height="5"/><rect x="765" y="460" width="5" height="5"/>
<rect x="771" y="451" width="6" height="1"/><rect x="771" y="453" width="6" height="1"/><rect x="771" y="455" width="6" height="1"/><rect x="772" y="457" width="5" height="1"/><rect x="772" y="459" width="5" height="1"/>
<rect x="771" y="462" width="6" height="1"/><rect x="771" y="464" width="6" height="1"/>
<rect x="778" y="453" width="1.5" height="1"/><rect x="778" y="455" width="1.5" height="1"/><rect x="778" y="457" width="1.5" height="1"/><rect x="778" y="459" width="1.5" height="1"/><rect x="778" y="464" width="1.5" height="1"/>
</g><g fill="#e8e8e8" shape-rendering="crispEdges"><rect x="766" y="453" width="3" height="1"/><rect x="767" y="452" width="1" height="3"/><rect x="766" y="462" width="3" height="1"/><rect x="767" y="461" width="1" height="3"/></g></svg>
<svg style="left:787px;top:449px;" width="17" height="18" viewBox="787 449 17 18">
<rect x="788" y="451" width="7" height="7" fill="#424242"/>
<path d="M789.6,457 L791.5,452.2 L793.4,457 M790.3,455.4 H792.7" fill="none" stroke="#ffffff" stroke-width="1.1"/>
<path d="M789.2,461 H793.9 L789.3,464.5 H794" fill="none" stroke="#2b2b2b" stroke-width="1.3" stroke-linejoin="bevel"/>
<path d="M799.1,454.2 V461.4" fill="none" stroke="#00539c" stroke-width="2.1"/>
<path d="M796,458.8 L799.1,462.9 L802.2,458.8 Z" fill="#00539c"/>
</svg>
<svg style="left:815px;top:449px;" width="18" height="18" viewBox="815 449 18 18"><path d="M819.2,463.3 L827.3,455.3" stroke="#9a9ca8" stroke-width="3.3" stroke-linecap="round"/><circle cx="827.3" cy="455.3" r="4.4" fill="#9a9ca8"/><path d="M827.8,454.8 L832.3,450.3" stroke="#ccd5f0" stroke-width="2.4"/></svg>
<span style="left:43.90px;top:10.04px;font:normal 12px/12px 'Liberation Sans', sans-serif;color:#1e1e1e;letter-spacing:-0.481px;">File</span>
<span style="left:81.90px;top:10.04px;font:normal 12px/12px 'Liberation Sans', sans-serif;color:#1e1e1e;letter-spacing:-0.263px;">Edit</span>
<span style="left:121.50px;top:10.04px;font:normal 12px/12px 'Liberation Sans', sans-serif;color:#1e1e1e;letter-spacing:-0.299px;">View</span>
<span style="left:166.80px;top:10.04px;font:normal 12px/12px 'Liberation Sans', sans-serif;color:#1e1e1e;letter-spacing:-0.060px;">Project</span>
<span style="left:223.90px;top:10.04px;font:normal 12px/12px 'Liberation Sans', sans-serif;color:#1e1e1e;letter-spacing:-0.097px;">Build</span>
<span style="left:271.10px;top:10.04px;font:normal 12px/12px 'Liberation Sans', sans-serif;color:#1e1e1e;letter-spacing:-0.294px;">Debug</span>
<span style="left:325.50px;top:10.04px;font:normal 12px/12px 'Liberation Sans', sans-serif;color:#1e1e1e;letter-spacing:0.095px;">Test</span>
<span style="left:367.70px;top:10.04px;font:normal 12px/12px 'Liberation Sans', sans-serif;color:#1e1e1e;letter-spacing:-0.267px;">Analyze</span>
<span style="left:429.10px;top:10.04px;font:normal 12px/12px 'Liberation Sans', sans-serif;color:#1e1e1e;letter-spacing:0.171px;">Tools</span>
<span style="left:477.30px;top:10.04px;font:normal 12px/12px 'Liberation Sans', sans-serif;color:#1e1e1e;letter-spacing:-0.356px;">Extensions</span>
<span style="left:552.50px;top:10.04px;font:normal 12px/12px 'Liberation Sans', sans-serif;color:#1e1e1e;letter-spacing:0.282px;">Window</span>
<span style="left:616.80px;top:10.04px;font:normal 12px/12px 'Liberation Sans', sans-serif;color:#1e1e1e;letter-spacing:-0.029px;">Help</span>
<span style="left:667.50px;top:10.04px;font:normal 12px/12px 'Liberation Sans', sans-serif;color:#6a6a6a;letter-spacing:-0.183px;">Search (Ctrl+Q)</span>
<span style="left:815.20px;top:10.04px;font:normal 12px/12px 'Liberation Sans', sans-serif;color:#2d3a78;letter-spacing:0.116px;">MyF...ram</span>
<span style="left:279.00px;top:40.04px;font:normal 12px/12px 'Liberation Sans', sans-serif;color:#1e1e1e;letter-spacing:-0.394px;">Debug</span>
<span style="left:349.50px;top:40.04px;font:normal 12px/12px 'Liberation Sans', sans-serif;color:#1e1e1e;letter-spacing:-0.443px;">Any CPU</span>
<span style="left:482.50px;top:40.04px;font:normal 12px/12px 'Liberation Sans', sans-serif;color:#1e1e1e;letter-spacing:-0.261px;">Start</span>
<span style="left:833.50px;top:42.04px;font:normal 12px/12px 'Liberation Sans', sans-serif;color:#1e1e1e;letter-spacing:-0.397px;">Live Share</span>
<span style="left:960.80px;top:40.18px;font:bold 11.6px/11.6px 'Liberation Sans', sans-serif;color:#ffffff;letter-spacing:0.250px;">ADMIN</span>
<span style="left:36.10px;top:77.04px;font:normal 12px/12px 'Liberation Sans', sans-serif;color:#1e1e1e;letter-spacing:-0.133px;">Program.cs*</span>
<span style="left:52.90px;top:98.04px;font:normal 12px/12px 'Liberation Sans', sans-serif;color:#1e1e1e;letter-spacing:-0.057px;">MyFirstProgram</span>
<span style="left:293.20px;top:98.04px;font:normal 12px/12px 'Liberation Sans', sans-serif;color:#1e1e1e;letter-spacing:-0.076px;">MyFirstProgram.Program</span>
<span style="left:533.80px;top:98.04px;font:normal 12px/12px 'Liberation Sans', sans-serif;color:#1e1e1e;letter-spacing:0.061px;">Main(string[] args)</span>
<span style="left:34.50px;top:618.04px;font:normal 12px/12px 'Liberation Sans', sans-serif;color:#1e1e1e;transform-origin:0 0;transform:scaleX(0.8237);">121</span>
<span style="left:55.10px;top:618.04px;font:normal 12px/12px 'Liberation Sans', sans-serif;color:#1e1e1e;">%</span>
<span style="left:132.00px;top:618.04px;font:normal 12px/12px 'Liberation Sans', sans-serif;color:#1e1e1e;letter-spacing:-0.197px;">No issues found</span>
<span style="left:87.05px;top:119.06px;font:normal 14.4px/14.4px 'Liberation Mono', monospace;color:#2b91af;">1</span>
<span style="left:87.05px;top:139.06px;font:normal 14.4px/14.4px 'Liberation Mono', monospace;color:#2b91af;">2</span>
<span style="left:87.05px;top:160.06px;font:normal 14.4px/14.4px 'Liberation Mono', monospace;color:#2b91af;">3</span>
<span style="left:87.05px;top:180.06px;font:normal 14.4px/14.4px 'Liberation Mono', monospace;color:#2b91af;">4</span>
<span style="left:87.05px;top:201.06px;font:normal 14.4px/14.4px 'Liberation Mono', monospace;color:#2b91af;">5</span>
<span style="left:87.05px;top:221.06px;font:normal 14.4px/14.4px 'Liberation Mono', monospace;color:#2b91af;">6</span>
<span style="left:87.05px;top:242.06px;font:normal 14.4px/14.4px 'Liberation Mono', monospace;color:#2b91af;">7</span>
<span style="left:87.05px;top:263.06px;font:normal 14.4px/14.4px 'Liberation Mono', monospace;color:#2b91af;">8</span>
<span style="left:87.05px;top:299.06px;font:normal 14.4px/14.4px 'Liberation Mono', monospace;color:#2b91af;">9</span>
<span style="left:78.41px;top:319.06px;font:normal 14.4px/14.4px 'Liberation Mono', monospace;color:#2b91af;letter-spacing:0.013px;">10</span>
<span style="left:78.41px;top:356.06px;font:normal 14.4px/14.4px 'Liberation Mono', monospace;color:#2b91af;letter-spacing:0.013px;">11</span>
<span style="left:78.41px;top:376.06px;font:normal 14.4px/14.4px 'Liberation Mono', monospace;color:#2b91af;letter-spacing:0.013px;">12</span>
<span style="left:78.41px;top:397.06px;font:normal 14.4px/14.4px 'Liberation Mono', monospace;color:#2b91af;letter-spacing:0.013px;">13</span>
<span style="left:78.41px;top:417.06px;font:normal 14.4px/14.4px 'Liberation Mono', monospace;color:#2b91af;letter-spacing:0.013px;">14</span>
<span style="left:78.41px;top:438.06px;font:normal 14.4px/14.4px 'Liberation Mono', monospace;color:#2b91af;letter-spacing:0.013px;">15</span>
<span style="left:78.41px;top:459.06px;font:normal 14.4px/14.4px 'Liberation Mono', monospace;color:#2b91af;letter-spacing:0.013px;">16</span>
<span style="left:142.30px;top:119.06px;font:normal 14.4px/14.4px 'Liberation Mono', monospace;color:#8d8dff;letter-spacing:0.012px;">using</span>
<span style="left:194.18px;top:119.06px;font:normal 14.4px/14.4px 'Liberation Mono', monospace;color:#8c8c8c;letter-spacing:0.013px;">System;</span>
<span style="left:142.30px;top:139.06px;font:normal 14.4px/14.4px 'Liberation Mono', monospace;color:#8d8dff;letter-spacing:0.012px;">using</span>
<span style="left:194.18px;top:139.06px;font:normal 14.4px/14.4px 'Liberation Mono', monospace;color:#8c8c8c;letter-spacing:0.011px;">System.Collections.Generic;</span>
<span style="left:142.30px;top:160.06px;font:normal 14.4px/14.4px 'Liberation Mono', monospace;color:#8d8dff;letter-spacing:0.012px;">using</span>
<span style="left:194.18px;top:160.06px;font:normal 14.4px/14.4px 'Liberation Mono', monospace;color:#8c8c8c;letter-spacing:0.011px;">System.Linq;</span>
<span style="left:142.30px;top:180.06px;font:normal 14.4px/14.4px 'Liberation Mono', monospace;color:#8d8dff;letter-spacing:0.012px;">using</span>
<span style="left:194.18px;top:180.06px;font:normal 14.4px/14.4px 'Liberation Mono', monospace;color:#8c8c8c;letter-spacing:0.011px;">System.Text;</span>
<span style="left:142.30px;top:201.06px;font:normal 14.4px/14.4px 'Liberation Mono', monospace;color:#8d8dff;letter-spacing:0.012px;">using</span>
<span style="left:194.18px;top:201.06px;font:normal 14.4px/14.4px 'Liberation Mono', monospace;color:#8c8c8c;letter-spacing:0.012px;">System.Threading.Tasks;</span>
<span style="left:142.30px;top:242.06px;font:normal 14.4px/14.4px 'Liberation Mono', monospace;color:#0000ff;letter-spacing:0.011px;">namespace</span>
<span style="left:228.77px;top:242.06px;font:normal 14.4px/14.4px 'Liberation Mono', monospace;color:#000000;letter-spacing:0.012px;">MyFirstProgram</span>
<span style="left:142.30px;top:263.06px;font:normal 14.4px/14.4px 'Liberation Mono', monospace;color:#000000;">{</span>
<span style="left:176.89px;top:299.06px;font:normal 14.4px/14.4px 'Liberation Mono', monospace;color:#0000ff;letter-spacing:0.012px;">class</span>
<span style="left:228.77px;top:299.06px;font:normal 14.4px/14.4px 'Liberation Mono', monospace;color:#2b91af;letter-spacing:0.013px;">Program</span>
<span style="left:176.89px;top:319.06px;font:normal 14.4px/14.4px 'Liberation Mono', monospace;color:#000000;">{</span>
<span style="left:211.48px;top:356.06px;font:normal 14.4px/14.4px 'Liberation Mono', monospace;color:#0000ff;letter-spacing:0.011px;">static</span>
<span style="left:272.00px;top:356.06px;font:normal 14.4px/14.4px 'Liberation Mono', monospace;color:#0000ff;letter-spacing:0.014px;">void</span>
<span style="left:315.24px;top:356.06px;font:normal 14.4px/14.4px 'Liberation Mono', monospace;color:#000000;letter-spacing:0.012px;">Main(</span>
<span style="left:358.48px;top:356.06px;font:normal 14.4px/14.4px 'Liberation Mono', monospace;color:#0000ff;letter-spacing:0.011px;">string</span>
<span style="left:410.36px;top:356.06px;font:normal 14.4px/14.4px 'Liberation Mono', monospace;color:#000000;letter-spacing:0.013px;">[]</span>
<span style="left:436.30px;top:356.06px;font:normal 14.4px/14.4px 'Liberation Mono', monospace;color:#8c8c8c;letter-spacing:0.014px;">args</span>
<span style="left:470.89px;top:356.06px;font:normal 14.4px/14.4px 'Liberation Mono', monospace;color:#000000;">)</span>
<span style="left:211.48px;top:376.06px;font:normal 14.4px/14.4px 'Liberation Mono', monospace;color:#000000;">{</span>
<span style="left:211.48px;top:397.06px;font:normal 14.4px/14.4px 'Liberation Mono', monospace;color:#000000;">}</span>
<span style="left:176.89px;top:417.06px;font:normal 14.4px/14.4px 'Liberation Mono', monospace;color:#000000;">}</span>
<span style="left:142.30px;top:438.06px;font:normal 14.4px/14.4px 'Liberation Mono', monospace;color:#000000;">}</span>
<span style="left:176.80px;top:283.09px;font:normal 11px/11px 'Liberation Sans', sans-serif;color:#999999;letter-spacing:0.468px;">0 references</span>
<span style="left:211.50px;top:340.09px;font:normal 11px/11px 'Liberation Sans', sans-serif;color:#999999;letter-spacing:0.468px;">0 references</span>
<span style="left:761.80px;top:78.04px;font:normal 12px/12px 'Liberation Sans', sans-serif;color:#ffffff;letter-spacing:-0.149px;">Solution Explorer</span>
<span style="left:762.70px;top:127.04px;font:normal 12px/12px 'Liberation Sans', sans-serif;color:#6a6a6a;letter-spacing:-0.140px;">Search Solution Explorer (Ctrl+;)</span>
<span style="left:790.70px;top:149.04px;font:normal 12px/12px 'Liberation Sans', sans-serif;color:#1e1e1e;letter-spacing:0.002px;">Solution &#x27;MyFirstProgram&#x27; (1 of 1 project)</span>
<span style="left:809.00px;top:167.04px;font:bold 12px/12px 'Liberation Sans', sans-serif;color:#1e1e1e;letter-spacing:-0.287px;">MyFirstProgram</span>
<span style="left:826.80px;top:185.04px;font:normal 12px/12px 'Liberation Sans', sans-serif;color:#1e1e1e;letter-spacing:-0.200px;">Properties</span>
<span style="left:826.80px;top:203.04px;font:normal 12px/12px 'Liberation Sans', sans-serif;color:#1e1e1e;letter-spacing:-0.508px;">References</span>
<span style="left:826.80px;top:221.04px;font:normal 12px/12px 'Liberation Sans', sans-serif;color:#1e1e1e;letter-spacing:0.209px;">App.config</span>
<span style="left:826.80px;top:239.04px;font:normal 12px/12px 'Liberation Sans', sans-serif;color:#1e1e1e;letter-spacing:-0.129px;">Program.cs</span>
<span style="left:762.80px;top:376.04px;font:normal 12px/12px 'Liberation Sans', sans-serif;color:#1e1e1e;letter-spacing:-0.156px;">Solution Explorer</span>
<span style="left:864.40px;top:376.04px;font:normal 12px/12px 'Liberation Sans', sans-serif;color:#ffffff;letter-spacing:-0.248px;">Team Explorer</span>
<span style="left:762.00px;top:405.04px;font:normal 12px/12px 'Liberation Sans', sans-serif;color:#ffffff;letter-spacing:-0.211px;">Properties</span>
<span style="left:27.90px;top:644.04px;font:normal 12px/12px 'Liberation Sans', sans-serif;color:#ffffff;transform-origin:0 0;transform:scaleX(0.9196);">Ready</span>
<span style="left:209.50px;top:644.04px;font:normal 12px/12px 'Liberation Sans', sans-serif;color:#ffffff;letter-spacing:-0.458px;">Ln 12</span>
<span style="left:301.80px;top:644.04px;font:normal 12px/12px 'Liberation Sans', sans-serif;color:#ffffff;letter-spacing:-0.398px;">Col 10</span>
<span style="left:393.70px;top:644.04px;font:normal 12px/12px 'Liberation Sans', sans-serif;color:#ffffff;letter-spacing:-0.558px;">Ch 10</span>
<span style="left:528.50px;top:644.04px;font:normal 12px/12px 'Liberation Sans', sans-serif;color:#ffffff;letter-spacing:0.142px;">INS</span>
<span style="left:817.10px;top:644.04px;font:normal 12px/12px 'Liberation Sans', sans-serif;color:#ffffff;letter-spacing:-0.019px;">Add to Source Control</span>
<span style="left:23.4px;top:72.6px;transform-origin:0 0;transform:rotate(90deg);font:normal 12px/12px 'Liberation Sans', sans-serif;color:#ffffff;letter-spacing:-0.477px;">Server Explorer</span>
<span style="left:23.4px;top:161.6px;transform-origin:0 0;transform:rotate(90deg);font:normal 12px/12px 'Liberation Sans', sans-serif;color:#ffffff;letter-spacing:0.288px;">Toolbox</span>
<div style="left:182px;top:81.8px;width:40px;height:40px;border-radius:50%;background:#e84545;box-shadow:0.5px 1px 2.5px rgba(0,0,0,.38);"></div>
<svg style="left:190px;top:86px" width="24" height="32" viewBox="190 86 24 32"><path d="M204.6,90.7 V113 H201.4 V95.7 C199.6,96.3 197.8,96.7 195.8,96.8 V94.4 C198.6,94 200.6,92.8 202,90.7 Z" fill="#ffffff"/></svg>
<div style="left:449px;top:81.8px;width:40px;height:40px;border-radius:50%;background:#e84545;box-shadow:0.5px 1px 2.5px rgba(0,0,0,.38);"></div>
<span style="left:448.2px;top:81.8px;width:40px;height:40px;text-align:center;font:30.5px/41px 'Liberation Sans', sans-serif;color:#fff;">2</span>
<div style="left:690px;top:81px;width:40px;height:40px;border-radius:50%;background:#e84545;box-shadow:0.5px 1px 2.5px rgba(0,0,0,.38);"></div>
<span style="left:690px;top:81px;width:40px;height:40px;text-align:center;font:30.5px/41px 'Liberation Sans', sans-serif;color:#fff;">3</span>
</body></html>
